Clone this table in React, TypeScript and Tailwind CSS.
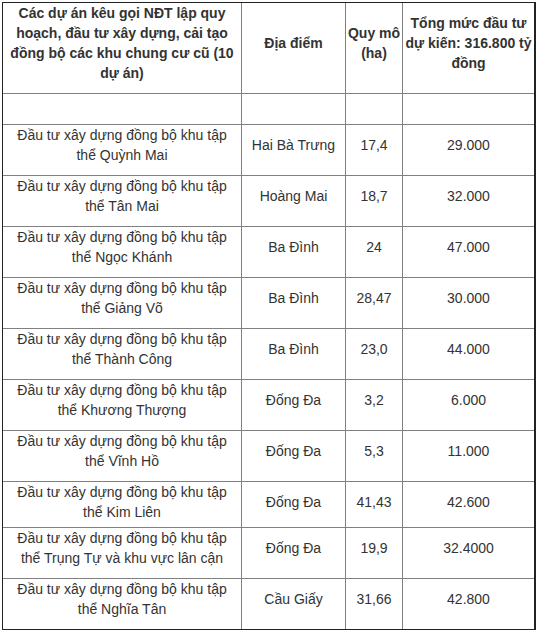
const headers = [
	"Các dự án kêu gọi NĐT lập quy hoạch, đầu tư xây dựng, cải tạo đồng bộ các khu chung cư cũ (10 dự án)",
	"Địa điểm",
	"Quy mô (ha)",
	"Tổng mức đầu tư dự kiến: 316.800 tỷ đồng",
];

const rows = [
	["Đầu tư xây dựng đồng bộ khu tập thể Quỳnh Mai", "Hai Bà Trưng", "17,4", "29.000"],
	["Đầu tư xây dựng đồng bộ khu tập thể Tân Mai", "Hoàng Mai", "18,7", "32.000"],
	["Đầu tư xây dựng đồng bộ khu tập thể Ngọc Khánh", "Ba Đình", "24", "47.000"],
	["Đầu tư xây dựng đồng bộ khu tập thể Giảng Võ", "Ba Đình", "28,47", "30.000"],
	["Đầu tư xây dựng đồng bộ khu tập thể Thành Công", "Ba Đình", "23,0", "44.000"],
	["Đầu tư xây dựng đồng bộ khu tập thể Khương Thượng", "Đống Đa", "3,2", "6.000"],
	["Đầu tư xây dựng đồng bộ khu tập thể Vĩnh Hồ", "Đống Đa", "5,3", "11.000"],
	["Đầu tư xây dựng đồng bộ khu tập thể Kim Liên", "Đống Đa", "41,43", "42.600"],
	["Đầu tư xây dựng đồng bộ khu tập thể Trụng Tự và khu vực lân cận", "Đống Đa", "19,9", "32.4000"],
	["Đầu tư xây dựng đồng bộ khu tập thể Nghĩa Tân", "Cầu Giấy", "31,66", "42.800"],
];

function Cell({
	text,
	col,
	last,
	bold,
	tight,
}: {
	text: string;
	col: number;
	last?: boolean;
	bold?: boolean;
	tight?: boolean;
}) {
	const edge = col === 3 ? "" : "border-r";
	const bottom = last ? "" : "border-b";
	return (
		<div
			className={`${edge} ${bottom} border-[#808080] flex flex-col justify-center text-center ${
				bold ? "font-bold px-px" : "px-[4px]"
			}`}>
			<p className={tight ? "mb-[5px]" : "mb-[10px]"}>{text}</p>
		</div>
	);
}

export default function App() {
	return (
		<div className="bg-white w-[541px] min-h-[630px] pt-[2px] pl-[2px] font-['Liberation_Sans',Arial,sans-serif] text-[14px] leading-[20px] text-[#333]">
			<div className="w-[534px] border-l border-t border-r-2 border-b-2 border-[#222]">
				<div className="grid grid-cols-[239px_104px_57px_131px]">
					{headers.map((h, i) => (
						<Cell key={`h${i}`} text={h} col={i} bold />
					))}
					{[0, 1, 2, 3].map((i) => (
						<Cell key={`e${i}`} text={"\u00a0"} col={i} />
					))}
					{rows.map((r, ri) =>
						r.map((c, ci) => (
							<Cell
								key={`${ri}-${ci}`}
								text={c}
								col={ci}
								last={ri === rows.length - 1}
								tight={ri === 7}
							/>
						))
					)}
				</div>
			</div>
		</div>
	);
}
